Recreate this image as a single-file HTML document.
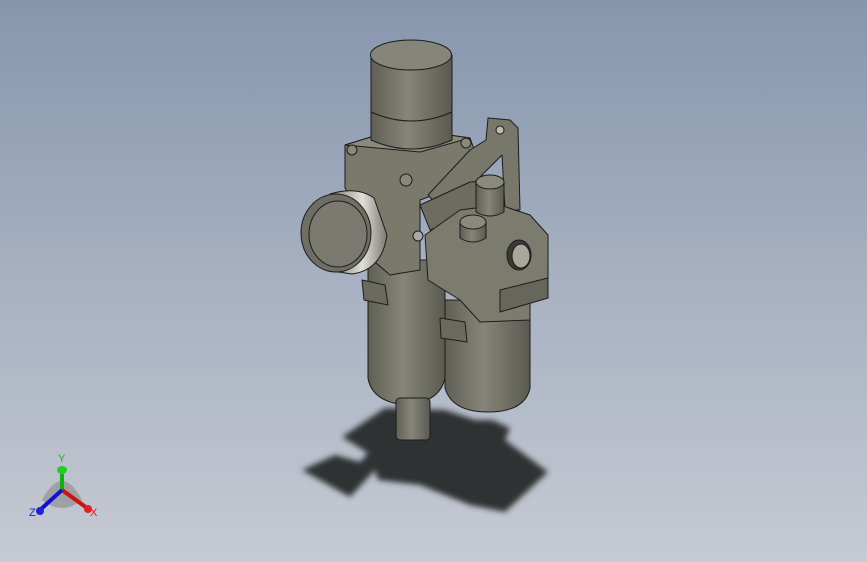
<!DOCTYPE html>
<html><head><style>
html,body{margin:0;padding:0;width:867px;height:562px;overflow:hidden}
body{background:linear-gradient(180deg,#8696ad 0%,#a7b1c1 50%,#c6cad3 100%)}
svg{position:absolute;left:0;top:0}
</style></head><body>
<svg width="867" height="562" viewBox="0 0 867 562">
<defs>
<linearGradient id="cyl" x1="0" x2="1"><stop offset="0" stop-color="#5f5f54"/><stop offset="0.45" stop-color="#85857a"/><stop offset="1" stop-color="#5a5a50"/></linearGradient>
<linearGradient id="gauge" x1="0" x2="1"><stop offset="0" stop-color="#6a6a60"/><stop offset="0.6" stop-color="#e0e0da"/><stop offset="1" stop-color="#7a7a70"/></linearGradient>
<filter id="blur"><feGaussianBlur stdDeviation="3"/></filter>
</defs>
<path filter="url(#blur)" fill="#2e3033" d="M342,437 L385,408 L445,410 L475,420 L492,420 L510,428 L505,440 L548,472 L505,512 L470,505 L420,485 L378,480 L375,470 L350,497 L302,470 L335,455 L360,462 L368,453 Z"/>
<g stroke="#1c1c1c" stroke-width="1" stroke-linejoin="round">
<path d="M368,260 L368,378 Q372,402 406,405 Q440,402 445,378 L445,260 Z" fill="url(#cyl)"/>
<rect x="396" y="398" width="34" height="42" rx="4" fill="url(#cyl)"/>
<path d="M445,300 L445,388 Q452,412 488,412 Q525,412 530,388 L530,300 Z" fill="url(#cyl)"/>
<path d="M362,280 L385,285 L388,305 L364,300 Z" fill="#6a6a5e"/>
<path d="M440,318 L465,322 L467,342 L441,338 Z" fill="#6a6a5e"/>
<path d="M345,145 L400,128 L470,138 L478,160 L470,182 L420,200 L420,270 L390,275 L375,262 L370,230 L345,188 Z" fill="#7a7a6c"/>
<path d="M345,145 L400,128 L470,138 L420,152 Z" fill="#8b8b7c"/>
<path d="M371,55 L371,140 Q411,158 452,140 L452,55 Z" fill="url(#cyl)"/>
<ellipse cx="411" cy="55" rx="40.5" ry="15" fill="#85857a"/>
<path d="M371,112 Q411,130 452,112" fill="none"/>
<circle cx="352" cy="150" r="5" fill="#8a8a7c"/><circle cx="466" cy="143" r="5" fill="#8a8a7c"/><circle cx="406" cy="180" r="6" fill="#8a8a7c"/>
<path d="M488,118 L510,120 L518,128 L520,210 L505,210 L502,155 L472,185 L440,208 L428,195 L470,150 L486,140 Z" fill="#77776a"/>
<path d="M420,205 L470,182 L500,180 L505,205 L430,230 Z" fill="#6c6c60"/>
<circle cx="500" cy="130" r="4" fill="#bcbcb0"/>
<path d="M425,235 L460,210 L500,205 L530,215 L548,235 L548,285 L530,295 L530,320 L480,322 L460,300 L428,280 Z" fill="#7c7c6e"/>
<path d="M500,290 L548,278 L548,298 L500,312 Z" fill="#66665a"/>
<ellipse cx="519" cy="255" rx="12" ry="15" fill="#3a3a34"/>
<ellipse cx="521" cy="256" rx="9" ry="12" fill="#a8a89c"/>
<path d="M476,182 L476,212 Q490,220 504,212 L504,182 Z" fill="url(#cyl)"/>
<ellipse cx="490" cy="182" rx="14" ry="7" fill="#8a8a7c"/>
<path d="M460,222 L460,238 Q473,246 486,238 L486,222 Z" fill="url(#cyl)"/>
<ellipse cx="473" cy="222" rx="13" ry="7" fill="#8a8a7c"/>
<path d="M330,194 Q357,186 374,198 L387,235 Q382,270 352,274 L325,270 Z" fill="url(#gauge)"/>
<ellipse cx="336" cy="233" rx="35" ry="39" fill="#6e6e64"/>
<ellipse cx="338" cy="234" rx="29" ry="33" fill="#7a7a70"/>
<circle cx="418" cy="236" r="5" fill="#aaa"/>
</g>
<g>
<path d="M42,500 Q62,462 82,500 Q62,516 42,500 Z" fill="#888" opacity="0.6"/>
<line x1="62" y1="490" x2="62" y2="472" stroke="#10b010" stroke-width="4"/>
<ellipse cx="62" cy="470" rx="5" ry="4" fill="#20d020"/>
<line x1="62" y1="490" x2="87" y2="508" stroke="#d01010" stroke-width="4"/>
<circle cx="88" cy="509" r="4" fill="#e02020"/>
<line x1="62" y1="490" x2="40" y2="510" stroke="#1010d0" stroke-width="4"/>
<circle cx="40" cy="511" r="4" fill="#2020e0"/>
<text x="58" y="462" font-family="Liberation Sans,sans-serif" font-size="11" fill="#10c010">Y</text>
<text x="90" y="516" font-family="Liberation Sans,sans-serif" font-size="11" fill="#e02020">X</text>
<text x="29" y="516" font-family="Liberation Sans,sans-serif" font-size="11" fill="#2020d0">Z</text>
</g>
</svg>
</body></html>
